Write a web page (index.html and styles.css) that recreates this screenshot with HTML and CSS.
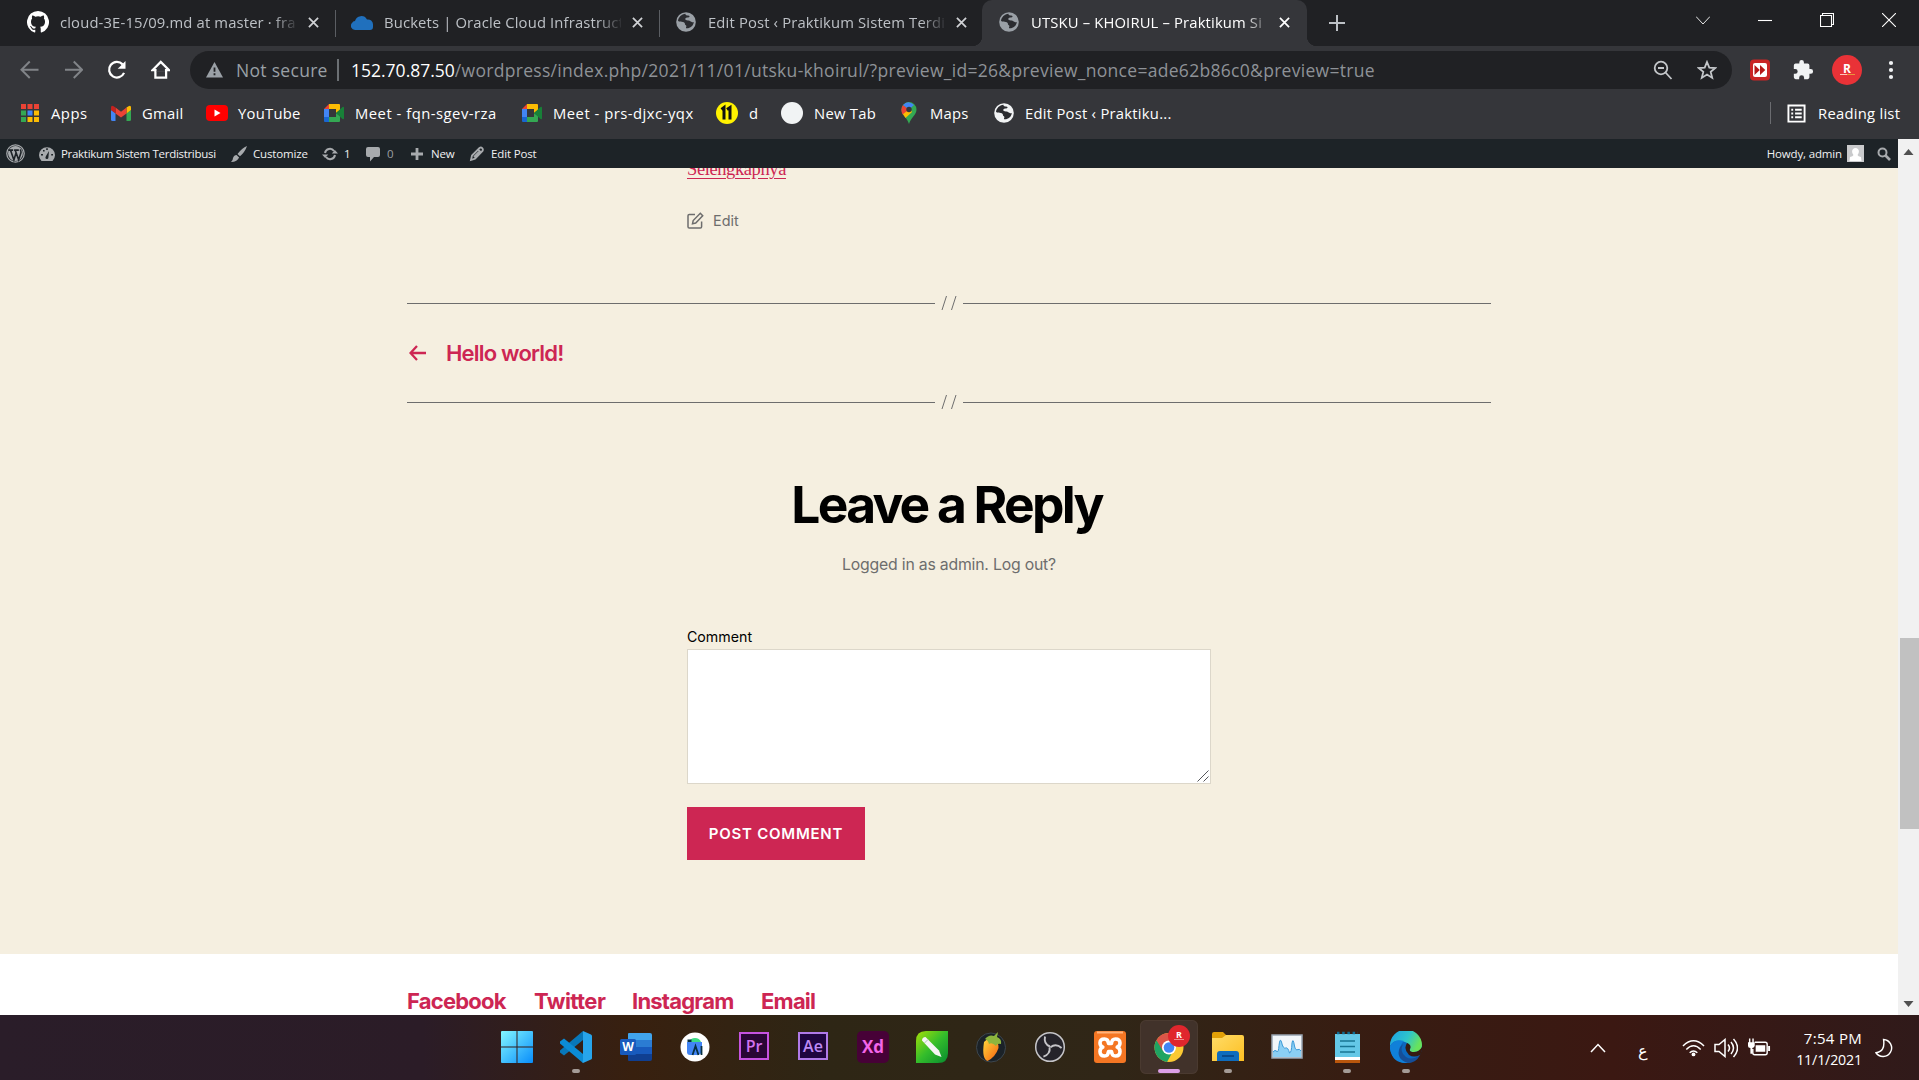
FILE: index.html
```html
<!DOCTYPE html>
<html lang="en">
<head>
<meta charset="utf-8">
<title>UTSKU – KHOIRUL – Praktikum Sistem Terdistribusi</title>
<link rel="stylesheet" href="styles.css">
</head>
<body>
<svg class="defs" aria-hidden="true">
  <defs>
    <symbol id="globe" viewBox="0 0 20 20"><circle cx="10" cy="10" r="9.8"/><path class="land" d="M9.5 1.8C5.5 2.2 2.4 5.3 2 9c1.700 1 3.400.8 4.900.900 1.300.300 2.100.900 2 2.100.100 1.200 1.200 1 1.500 2 .1.900-.7 1.300-.3 2.300 3.900.400 7.200-2.300 7.800-6.300-1.600.6-2.800-.4-3.900-1.100-1.300-.7-2.900-.2-4.100-.9-1-.700-.7-1.800.300-2.300 1.200-.4 2.700.100 3.300-.9.400-1-1.100-1.200-2.300-1.200-1.200-.200-1.800-.8-1.700-1.800z"/></symbol>
    <symbol id="cross" viewBox="0 0 12 12"><path d="M1 1l10 10M11 1L1 11"/></symbol>
    <symbol id="meet" viewBox="0 0 20 20"><path fill="#4285f4" d="M0 6h5v9H0z"/><path fill="#ea4335" d="M5 1v5H0z"/><path fill="#fbbc04" d="M5 1h10q1 0 1 1v5l-4 3V6H5z"/><path fill="#34a853" d="M5 14h7v-4l4 3v5q0 1-1 1H5z"/><path fill="#1967d2" d="M0 14h5v5H1q-1 0-1-1z"/><path fill="#188038" d="M12 10l6.500-6q1.500-.5 1.500.7v10.600q0 1.200-1.500.7z"/></symbol>
    <linearGradient id="win" x2="1" y2="1"><stop offset="0" stop-color="#83f7ff"/><stop offset="1" stop-color="#088dfb"/></linearGradient>
    <linearGradient id="corel" x2="1" y2="1"><stop offset="0" stop-color="#a5df08"/><stop offset=".5" stop-color="#34bd2b"/><stop offset="1" stop-color="#078b2f"/></linearGradient>
    <linearGradient id="fold" x2="1" y2="1"><stop offset="0" stop-color="#ffdc68"/><stop offset="1" stop-color="#fdbf22"/></linearGradient>
    <linearGradient id="edgeA" x2="1" y2=".4"><stop offset="0" stop-color="#1b9ee8"/><stop offset=".6" stop-color="#2fc5ca"/><stop offset="1" stop-color="#68e35c"/></linearGradient>
    <linearGradient id="fruit" x2="1" y2="1"><stop offset="0" stop-color="#ffd63c"/><stop offset="1" stop-color="#f4600f"/></linearGradient>
  </defs>
</svg>

<header class="browser">
  <div class="tabs">
    <div class="tab">
      <svg class="fav" viewBox="0 0 16 16" fill="#fff"><path d="M8 0a8 8 0 00-2.530 15.590c.4.070.550-.170.550-.380v-1.490c-2.230.480-2.700-.950-2.700-.950-.360-.920-.890-1.170-.890-1.170-.730-.500.060-.490.060-.490.800.060 1.230.830 1.230.830.710 1.220 1.870.870 2.330.660.070-.520.280-.870.500-1.070-1.770-.200-3.640-.890-3.640-3.950 0-.870.310-1.590.820-2.150-.080-.200-.360-1.020.080-2.120 0 0 .670-.210 2.200.820a7.600 7.600 0 014 0c1.530-1.040 2.200-.820 2.200-.820.440 1.100.160 1.920.080 2.120.510.560.820 1.270.820 2.150 0 3.070-1.870 3.750-3.650 3.950.290.250.540.730.540 1.480v2.200c0 .210.150.460.550.380A8 8 0 008 0z"/></svg>
      <span class="tab-title">cloud-3E-15/09.md at master · fra</span>
      <svg class="x"><use href="#cross"/></svg>
    </div>
    <div class="tab">
      <svg class="fav" viewBox="0 0 22 22"><path fill="#2070bd" d="M4 19a4.200 4.200 0 01-3-7 4 4 0 013-2 6.500 6.500 0 0112-1.500 5 5 0 016 5V16q0 3-3 3z"/></svg>
      <span class="tab-title">Buckets | Oracle Cloud Infrastruct</span>
      <svg class="x"><use href="#cross"/></svg>
    </div>
    <div class="tab last-idle">
      <svg class="fav globe"><use href="#globe"/></svg>
      <span class="tab-title">Edit Post ‹ Praktikum Sistem Terdi</span>
      <svg class="x"><use href="#cross"/></svg>
    </div>
    <div class="tab active">
      <svg class="fav globe"><use href="#globe"/></svg>
      <span class="tab-title">UTSKU – KHOIRUL – Praktikum Si</span>
      <svg class="x"><use href="#cross"/></svg>
    </div>
    <svg class="plus" viewBox="0 0 16 16"><path d="M8 0v16M0 8h16"/></svg>
    <div class="window-buttons">
      <svg class="caret" viewBox="0 0 14 14"><path d="M0 3.500l7 7.500 7-7.500"/></svg>
      <svg viewBox="0 0 14 14"><path d="M0 7.500h14"/></svg>
      <svg viewBox="0 0 14 14"><path d="M.5 2.500h11v11h-11zM2.500 2.500v-2h11v11h-2"/></svg>
      <svg viewBox="0 0 14 14"><path d="M0 0l14 14M14 0L0 14"/></svg>
    </div>
  </div>

  <div class="toolbar">
    <div class="nav">
      <svg class="dim" viewBox="0 0 20 20"><path d="M19 10H2M10 1.500L1.500 10l8.500 8.500"/></svg>
      <svg class="dim" viewBox="0 0 20 20"><path d="M1 10h17M10 1.500l8.500 8.500-8.500 8.500"/></svg>
      <svg viewBox="0 0 20 20"><path class="thick" d="M17.500 13.200A8 8 0 1116 4.500"/><path fill="#fff" stroke="none" d="M19 1v8h-8z"/></svg>
      <svg viewBox="0 0 20 20"><path class="thick" d="M4.500 9.500V18h11V9.500M1.500 10.500L10 2l8.500 8.500z"/><path d="M5.700 9h8.600v3H5.700z" fill="#35363a" stroke="none"/></svg>
    </div>
    <div class="omnibox">
      <svg class="warn" viewBox="0 0 17 16"><path fill="#9aa0a6" d="M8.500 0L17 15.500H0z"/><path stroke="#202124" stroke-width="1.800" d="M8.500 5.500v4.300M8.500 11.300v1.900"/></svg>
      <span class="not-secure">Not secure</span>
      <span class="url"><b>152.70.87.50</b>/wordpress/index.php/2021/11/01/utsku-khoirul/?preview_id=26&amp;preview_nonce=ade62b86c0&amp;preview=true</span>
      <svg class="omni-icon" viewBox="0 0 20 20"><circle cx="8" cy="8" r="6.300"/><path d="M12.500 12.500L18.500 19M5 8h6"/></svg>
      <svg class="omni-icon" viewBox="0 0 20 20"><path d="M10 2l2.300 5.600 6 .4-4.600 3.900 1.500 6-5.200-3.300-5.200 3.300 1.500-6L1.700 8l6-.4z"/></svg>
    </div>
    <svg class="ext" viewBox="0 0 22 22"><rect x="1" y=".5" width="20" height="21" rx="4" fill="#c92626"/><rect x="4" y="4" width="14" height="14" rx="2" fill="#fff"/><path fill="#b51919" d="M5.500 6l5.300 5-5.300 5zM11 6l5.300 5-5.300 5z"/></svg>
    <svg class="puzzle" viewBox="0 0 24 24"><path fill="#f1f3f4" d="M20.500 11H19V7a2 2 0 00-2-2h-4V3.500a2.500 2.500 0 00-5 0V5H4a2 2 0 00-2 2v3.800h1.500a2.700 2.700 0 010 5.400H2V20a2 2 0 002 2h3.800v-1.500a2.700 2.700 0 015.400 0V22H17a2 2 0 002-2v-4h1.500a2.500 2.500 0 000-5z"/></svg>
    <svg class="profile" viewBox="0 0 30 30"><circle cx="15" cy="15" r="15" fill="#e93237"/><text x="15" y="18" text-anchor="middle" font-size="12">R</text><path stroke="#ffc3bb" d="M8 19.500h7"/><path stroke="#e8953c" d="M15 19.500h8"/></svg>
    <svg class="dots" viewBox="0 0 6 20"><circle cx="3" cy="3" r="2.100"/><circle cx="3" cy="10" r="2.100"/><circle cx="3" cy="17" r="2.100"/></svg>
  </div>

  <div class="bookmarks">
    <div class="bm apps"><svg viewBox="0 0 20 20"><path fill="#ea4335" d="M1 1h5v5H1zM7.500 1h5v5h-5zM14 1h5v5h-5z"/><path fill="#34a853" d="M1 7.500h5v5H1zM1 14h5v5H1z"/><path fill="#4285f4" d="M7.500 7.500h5v5h-5z"/><path fill="#fbbc04" d="M14 7.500h5v5h-5zM7.500 14h5v5h-5zM14 14h5v5h-5z"/></svg>Apps</div>
    <div class="bm gmail"><svg viewBox="0 0 20 20"><path fill="#4285f4" d="M0 7l4.500 3v8H1.500Q0 18 0 16.500z"/><path fill="#34a853" d="M15.500 10L20 7v9.500q0 1.500-1.500 1.500h-3z"/><path fill="#fbbc04" d="M15.500 4.500q4.500-3.500 4.500 0V7l-4.500 3.500z"/><path fill="#ea4335" d="M4.500 4.500L10 8.700l5.500-4.200v6L10 14.500l-5.500-4z"/><path fill="#c5221f" d="M0 4.500q0-3.500 4.500 0v6L0 7z"/></svg>Gmail</div>
    <div class="bm youtube"><svg viewBox="0 0 22 20"><rect y="2" width="22" height="16" rx="4" fill="red"/><path fill="#fff" d="M8.500 6.500l6 3.500-6 3.500z"/></svg>YouTube</div>
    <div class="bm meet1"><svg viewBox="0 0 20 20"><use href="#meet"/></svg>Meet - fqn-sgev-rza</div>
    <div class="bm meet2"><svg viewBox="0 0 20 20"><use href="#meet"/></svg>Meet - prs-djxc-yqx</div>
    <div class="bm eleven"><svg viewBox="0 0 22 22"><circle cx="11" cy="11" r="11" fill="#fff200"/><path fill="none" stroke="#111" stroke-width="3" d="M5.500 7.500L8 5.500V17.500M11 7.500l3-2V17.500"/></svg>d</div>
    <div class="bm newtab"><svg viewBox="0 0 22 22"><circle cx="11" cy="11" r="11" fill="#f1f3f4"/></svg>New Tab</div>
    <div class="bm maps"><svg viewBox="0 0 16 22"><path fill="#34a853" d="M8 22C6.500 16 .5 13 .5 7.500a7.500 7.500 0 0115 0C15.500 13 9.500 16 8 22z"/><path fill="#fbbc04" d="M1.500 11.500L8 4l3 6-6.500 6z"/><path fill="#ea4335" d="M2 3l6 4.500-6.500 5Q-1 7 2 3z"/><path fill="#4285f4" d="M2 3q5-5.500 11 0L8 7.500z"/><circle cx="8" cy="7.500" r="2.700" fill="#35363a"/></svg>Maps</div>
    <div class="bm edit"><svg class="globe light"><use href="#globe"/></svg>Edit Post ‹ Praktiku...</div>
    <div class="reading"><svg viewBox="0 0 20 20"><path fill="none" stroke="#fff" stroke-width="2" d="M1.500 1.500h17v17h-17z"/><path stroke="#fff" stroke-width="2" d="M4.500 6h2M8.500 6h7M4.500 10h2M8.500 10h7M4.500 14h2M8.500 14h7"/></svg>Reading list</div>
  </div>
</header>

<div class="viewport">
  <div class="page">
    <nav class="adminbar">
      <svg class="wp" viewBox="0 0 20 20"><circle cx="10" cy="10" r="9.200" fill="none" stroke="#a7aaad" stroke-width="1.300"/><circle cx="10" cy="10" r="7.800" fill="#a7aaad"/><path fill="none" stroke="#1d2327" stroke-width="1.700" d="M2.500 6.500h5M4.800 6.500l3.500 10.300L10.700 9M8.500 6.500h5M9.700 6.500l3.600 10 2.500-7.500q.2-2-1-3.200"/></svg>
      <div class="ab site"><svg viewBox="0 0 16 16"><path fill="#a7aaad" d="M2.500 15A8 8 0 1113.500 15z"/><path fill="#1d2327" d="M7 10l3-5-.6 6.500a1.500 1.500 0 01-3 0zM2 8h2v1.500H2zM4 4h1.600v1.600H4zM7.200 2.300h1.600v1.600H7.200zM12.200 8H14v1.500h-1.800z"/></svg>Praktikum Sistem Terdistribusi</div>
      <div class="ab custom"><svg viewBox="0 0 16 16"><path fill="#a7aaad" d="M16 0q-5 2-9.500 8L9 10.300Q14 6 16 0zM5.500 9l2.600 2.400Q6.500 15.500 0 16q2-1.500 2-4 1-3 3.500-3z"/></svg>Customize</div>
      <div class="ab update"><svg viewBox="0 0 16 16"><path fill="none" stroke="#a7aaad" stroke-width="2" d="M3 7a5 5 0 019-2M13 9a5 5 0 01-9 2"/><path fill="#a7aaad" d="M9.800 7.500H16L12.900 4zM0 8.500h6.200L3.100 12z"/></svg>1</div>
      <div class="ab comments"><svg viewBox="0 0 16 16"><path fill="#a7aaad" d="M3 1h10q2 0 2 2v6q0 2-2 2H9l-4 4.500V11H3q-2 0-2-2V3q0-2 2-2z"/></svg>0</div>
      <div class="ab new"><svg viewBox="0 0 16 16"><path stroke="#a7aaad" stroke-width="2.800" d="M8 2v12M2 8h12"/></svg>New</div>
      <div class="ab editpost"><svg viewBox="0 0 16 16"><path fill="none" stroke="#a7aaad" stroke-width="1.800" d="M2 14l1-4.500L10.500 2q1.500-1 2.700.2t.3 2.800L6 12.700zM5 11l6-6M9 3.500l3.200 3.200"/></svg>Edit Post</div>
      <div class="howdy">Howdy, admin<svg class="face" viewBox="0 0 17 17"><path fill="#c9cacc" d="M0 0h17v17H0z"/><path fill="#fff" d="M8.500 3a3.500 3.500 0 013.400 4q-.4 2-1.400 3 .5 1.300 3.500 2l.5 4h-12l.5-4q3-.7 3.500-2-1-1-1.400-3a3.500 3.500 0 013.400-4z"/></svg><svg class="find" viewBox="0 0 14 14"><circle cx="5.500" cy="5.500" r="4" fill="none" stroke="#a7aaad" stroke-width="2"/><path stroke="#a7aaad" stroke-width="2.600" d="M8.500 8.500L13 13"/></svg></div>
    </nav>

    <main class="content">
      <div class="entry">
        <div class="more"><a>Selengkapnya</a></div>
        <div class="edit-link"><svg viewBox="0 0 17 17"><path d="M8 2.500H2.300Q1 2.500 1 3.800v10.900Q1 16 2.300 16h11q1.300 0 1.300-1.300V9.500M13.300 1.300l2.400 2.400-7 7.300-3.200.7.700-3.200z"/></svg>Edit</div>
      </div>
      <div class="rule"><i></i><svg viewBox="0 0 16 14"><path d="M1 14L5.500 0M10.500 14L15 0"/></svg><i></i></div>
      <a class="previous"><svg viewBox="0 0 18 16"><path d="M17 8H2M8 1L1.500 8 8 15"/></svg>Hello world!</a>
      <div class="rule"><i></i><svg viewBox="0 0 16 14"><path d="M1 14L5.500 0M10.500 14L15 0"/></svg><i></i></div>
      <h2>Leave a Reply</h2>
      <p class="logged">Logged in as admin. Log out?</p>
      <form class="reply">
        <label for="comment">Comment</label>
        <div class="field">
          <textarea id="comment"></textarea>
          <svg class="grip" viewBox="0 0 12 12"><path d="M.5 11.500l11-11M6.500 11.500l5-5"/></svg>
        </div>
        <button type="button">POST COMMENT</button>
      </form>
    </main>
    <footer class="footer"><a class="fb">Facebook</a><a class="tw">Twitter</a><a class="ig">Instagram</a><a class="em">Email</a></footer>
  </div>
  <div class="scrollbar">
    <svg viewBox="0 0 10 6"><path d="M0 6l5-6 5 6z"/></svg>
    <div class="thumb"></div>
    <svg viewBox="0 0 10 6"><path d="M0 0l5 6 5-6z"/></svg>
  </div>
</div>

<div class="taskbar">
  <div class="dock">
    <div class="app"><svg viewBox="0 0 32 32"><path fill="url(#win)" d="M1 0h14.500v15.500H0V1q0-1 1-1zM16.500 0H31q1 0 1 1v14.500H16.500zM0 16.500h15.500V32H1q-1 0-1-1zM16.500 16.500H32V31q0 1-1 1H16.500z"/></svg></div>
    <div class="app run"><svg viewBox="0 0 32 32"><path fill="#0877b9" d="M23 0v9L4 24.500 0 21.500v-2z"/><path fill="#0b8bd5" d="M4 7.500L0 10.500v2L23 32v-9z"/><path fill="#27a5ec" d="M23 0l8 3.500Q32 4 32 5v22q0 1-1 1.500L23 32q-1-.5 0-3z"/></svg></div>
    <div class="app"><svg viewBox="0 0 32 32"><path fill="#41a5ee" d="M9 2h21q2 0 2 2v5.500H8V3q0-1 1-1z"/><path fill="#2b7cd3" d="M8 9h24v7H8z"/><path fill="#185abd" d="M8 16h24v7H8z"/><path fill="#103f91" d="M8 23h24v5q0 2-2 2H9q-1 0-1-1z"/><rect y="8" width="16" height="16" rx="1.500" fill="#185abd"/><text x="8" y="20" text-anchor="middle" font-size="12">W</text></svg></div>
    <div class="app"><svg viewBox="0 0 32 32"><circle cx="16" cy="16" r="14.500" fill="#fff"/><path fill="#3ddc84" d="M10 11q1.500-4 6-4t6 4z"/><path fill="#073042" d="M8.500 8.500h4V12h-4z"/><path fill="#4285f4" d="M8 11h15v11l-4 2h-8q-3 0-3-3z"/><path fill="none" stroke="#073042" stroke-width="1.800" d="M13.500 24l3-9 3 9M22.500 15v9"/></svg></div>
    <div class="app"><svg viewBox="0 0 32 32"><path fill="#2a0635" stroke="#c653e0" stroke-width="2" d="M2 2h28v26H2z"/><text class="pr" x="16" y="21" text-anchor="middle">Pr</text></svg></div>
    <div class="app"><svg viewBox="0 0 32 32"><path fill="#1f0540" stroke="#b07ae8" stroke-width="2" d="M2 2h28v26H2z"/><text class="ae" x="16" y="21" text-anchor="middle">Ae</text></svg></div>
    <div class="app"><svg viewBox="0 0 32 32"><rect width="32" height="32" rx="5" fill="#470137"/><text class="xd" x="16" y="22" text-anchor="middle">Xd</text></svg></div>
    <div class="app"><svg viewBox="0 0 32 32"><path fill="url(#corel)" d="M10 0h22v22q0 10-10 10H0V10Q0 0 10 0z"/><path fill="#f5f5f5" d="M6 9.500Q6 6 9.500 6L23 19.500l2.500 6.500-6.500-2.500z"/><path stroke="#b5c1b2" d="M8.500 12l3.500-3.500"/></svg></div>
    <div class="app"><svg viewBox="0 0 32 32"><circle cx="16" cy="16.500" r="14.500" fill="#1b2228" stroke="#3d464d"/><path fill="url(#fruit)" d="M9 11q4-5 9-1 6 0 5.500 7-3 9-11 13-6-2-3.500-19z"/><path fill="#8db53d" d="M10 8q4-5 9-3l4-4-1 5q5 2 4 7-4-1-5 2-4-4-7-2-1-4-4-5z"/></svg></div>
    <div class="app"><svg viewBox="0 0 32 32"><circle cx="16" cy="16" r="14.300" fill="#25232a" stroke="#c5c4c8" stroke-width="1.500"/><g fill="none" stroke="#c5c4c8" stroke-width="1.900"><path d="M16 15.500Q9.500 13 11 5.500"/><path d="M16 15.500Q9.500 13 11 5.500" transform="rotate(120 16 16)"/><path d="M16 15.500Q9.500 13 11 5.500" transform="rotate(240 16 16)"/></g></svg></div>
    <div class="app"><svg viewBox="0 0 32 32"><rect width="32" height="32" rx="3" fill="#f47623"/><path stroke="#ffb27a" stroke-width="2" d="M3 1.500h26"/><path fill="none" stroke="#fff" stroke-width="3.600" stroke-linejoin="round" d="M10.500 8q-4.500 0-4.500 4 0 2.800 2.800 4.200Q6 17.500 6 20.500 6 25 10.500 25q3.700 0 4-4.500h3q.3 4.500 4 4.500 4.500 0 4.500-4.500 0-3-2.800-4.300Q26 14.800 26 12q0-4-4.500-4-3.700 0-4 4.500h-3Q14.200 8 10.500 8z"/></svg></div>
    <div class="app current"><svg viewBox="0 0 32 32"><circle cx="16" cy="16.500" r="14.500" fill="#fbc933"/><path fill="#1fa463" d="M16 16.500L3.400 9.300A14.500 14.500 0 0014 30.900l5-9z"/><path fill="#db5548" d="M16 16.500V10h13A14.500 14.500 0 003.400 9.300L10 20z"/><circle cx="16" cy="16.500" r="7" fill="#fff"/><circle cx="16" cy="16.500" r="5.300" fill="#4285f4"/></svg><svg class="badge" viewBox="0 0 22 22"><circle cx="11" cy="11" r="11" fill="#e0262d"/><text x="11" y="13" text-anchor="middle" font-size="9">R</text><path stroke="#f2898b" d="M6 14.500h10"/></svg></div>
    <div class="app run"><svg viewBox="0 0 32 32"><path fill="#e2a007" d="M2 1h9l3 3v6H0V3q0-2 2-2z"/><path fill="url(#fold)" d="M0 7h10l4-3h16q2 0 2 2v24H0z"/><path fill="#0f6cbd" d="M5 30v-7q0-3 3-3h16q3 0 3 3v7z"/><path stroke="#083f7d" stroke-width="1.500" d="M10 25h12"/></svg></div>
    <div class="app"><svg viewBox="0 0 32 32"><path fill="#f2f6fa" stroke="#98a4b1" stroke-width="1.500" d="M1 4h30v23H1z"/><path fill="#8bcff4" d="M2 26v-5q2-3 4-.5 1.500 1 2-6Q9 6 10.500 11q1.500 7 4 6t4 5q2 0 2.500-10 1-6 2.500 3 1 5 3.500 3.500 1.500-1 3 1.500v6z"/><path fill="none" stroke="#3b99d7" d="M2 21q2-3 4-.5 1.500 1 2-6Q9 6 10.500 11q1.500 7 4 6t4 5q2 0 2.500-10 1-6 2.500 3 1 5 3.500 3.500 1.500-1 3 1.500"/></svg></div>
    <div class="app run"><svg viewBox="0 0 32 32"><path fill="#64c8e7" d="M4 3h25v25H4z"/><path fill="#fff" d="M4 26h25v3H4z"/><path fill="#b9560c" d="M4 29h25v3H4z"/><path stroke="#106d94" stroke-width="2.500" stroke-dasharray="2.500 2.700" d="M6 2h21"/><path stroke="#187594" stroke-width="1.700" d="M9 10h15M9 15.500h15M9 21h15"/></svg></div>
    <div class="app run"><svg viewBox="0 0 32 32"><circle cx="16" cy="16" r="16" fill="#0c68bf"/><path fill="url(#edgeA)" d="M0 15A16 16 0 0132 14q0 7-8 7-7 0-4-3 1-5-5-7Q4 7 0 15z"/><path fill="#1080d9" d="M0 15Q5 7 14 10q-4 3-4 10 1 9 9 11.700Q3 34 0 18z"/><path fill="#154e98" d="M13 13q-4 8 3 13 6 4 14-2-4 8-12 8Q5 28 10 16z"/><path fill="#351b11" d="M17 12q5 2 3 6-1 3 4 3 5 0 8-5 .5 5-2 8-6 3-11 0-6-6-2-12z"/></svg></div>
  </div>
  <div class="tray">
    <svg class="up" viewBox="0 0 16 10"><path d="M1 9l7-7.500L15 9"/></svg>
    <span class="lang">ع</span>
    <svg class="wifi" viewBox="0 0 24 18"><path d="M1 7q11-11 22 0M4.500 10.500q7.500-7.500 15 0M8 14q4-4 8 0"/><circle cx="12" cy="15.700" r="2" fill="#fff" stroke="none"/></svg>
    <svg class="sound" viewBox="0 0 24 20"><path d="M1 6.500h4L11 1.500v17l-6-5H1zM14 6.500q3 3.500 0 7M17 4q5 6 0 12M19.500 1q8 9 0 18"/></svg>
    <svg class="battery" viewBox="0 0 24 20"><path d="M7 4h11q2 0 2 2v9q0 2-2 2H7q-2 0-2-2v-4"/><path fill="#fff" stroke="none" d="M8 7h10v7H8zM21 8h2v5h-2zM0 4h7v4q-1 2-2.500 2v6h-2v-6Q0 10 0 8zM1 0h1.500v4H1zM4.500 0H6v4H4.500z"/></svg>
    <div class="clock"><span class="time">7:54 PM</span><span>11/1/2021</span></div>
    <svg class="moon" viewBox="0 0 20 20"><path d="M9 1a9 9 0 11-8 14q10-1 8-14z"/></svg>
  </div>
</div>
</body>
</html>
```
FILE: styles.css
```css
* { box-sizing: border-box; }
body {
  margin: 0;
  width: 1919px;
  height: 1080px;
  overflow: hidden;
  display: flex;
  flex-direction: column;
  font-family: "Open Sans", "Noto Sans", sans-serif;
}
svg { display: block; flex: none; }
.defs { position: absolute; width: 0; height: 0; }
svg text { font-family: "Open Sans", sans-serif; font-weight: 700; letter-spacing: 0; fill: #fff; }

/* Browser chrome */
.browser { height: 139px; flex: none; background: #35363a; color: #fff; font-size: 14.800px; letter-spacing: .25px; }
.tabs { height: 46px; display: flex; align-items: center; background: #202124; padding-left: 12px; }
.tab { width: 324px; height: 46px; display: flex; align-items: center; padding: 0 16px 2px 15px; position: relative; color: #bdc1c6; }
.tab:nth-child(-n+2)::after { content: ""; position: absolute; right: 0; top: 10px; width: 1px; height: 27px; background: #5b5e63; }
.last-idle { width: 322px; }
.active { width: 325px; padding-left: 16px; background: #35363a; border-radius: 10px 10px 0 0; color: #fff; }
.active::before, .active::after { content: ""; position: absolute; bottom: 0; width: 10px; height: 10px; }
.active::before { left: -10px; background: radial-gradient(circle at 0 0, #202124 10px, #35363a 10.500px); }
.active::after { right: -10px; background: radial-gradient(circle at 100% 0, #202124 10px, #35363a 10.500px); }
.fav { width: 22px; height: 22px; }
.fav.globe { width: 20px; height: 20px; margin: 0 1px; }
.globe { fill: #9aa0a6; }
.land { fill: #2b2c30; }
.light { fill: #f1f3f4; }
.tab-title { width: 237px; margin-left: 11px; white-space: nowrap; letter-spacing: .15px; -webkit-mask-image: linear-gradient(90deg, #000 90%, transparent 101%); mask-image: linear-gradient(90deg, #000 90%, transparent 101%); }
.x { width: 11px; height: 11px; margin-left: 11px; stroke: #d0d2d5; stroke-width: 1.900; }
.active .x { stroke: #fff; }
.plus { width: 16px; height: 16px; margin-left: 22px; stroke: #bdc1c6; stroke-width: 2; }
.window-buttons { margin-left: auto; display: flex; gap: 48px; padding: 0 23px 6px 0; }
.window-buttons svg { width: 14px; height: 14px; fill: none; stroke: #fff; stroke-width: 1.100; }
.window-buttons .caret { stroke-width: .900; }

.toolbar { height: 48px; display: flex; align-items: center; padding-left: 20px; }
.nav { display: flex; gap: 24px; width: 170px; }
.nav svg { width: 19.500px; height: 19.500px; fill: none; stroke: #fff; stroke-width: 2; }
.nav .dim { stroke: #818488; }
.thick { stroke-width: 2.300; }
.omnibox { width: 1542px; height: 38px; border-radius: 19px; background: #202124; display: flex; align-items: center; padding: 0 15px 0 16px; font-size: 17.500px; letter-spacing: .3px; color: #9aa0a6; white-space: nowrap; }
.warn { width: 17px; height: 16px; }
.not-secure { width: 103px; margin-left: 13px; height: 22px; line-height: 22px; border-right: 2px solid #6c7074; }
.url { flex: 1; margin-left: 12px; line-height: 22px; color: #8e9297; }
.url b { font-weight: 400; letter-spacing: 0; color: #fff; }
.omni-icon { width: 20px; height: 20px; margin-left: 24px; fill: none; stroke: #c4c7ca; stroke-width: 1.800; }
.ext { width: 22px; height: 22px; margin-left: 17px; }
.puzzle { width: 22px; height: 22px; margin-left: 21px; }
.profile { width: 30px; height: 30px; margin-left: 18px; }
.dots { width: 6px; height: 20px; margin-left: 26px; fill: #f1f3f4; }

.bookmarks { height: 42px; display: flex; align-items: center; padding: 0 17px 4px 20px; white-space: nowrap; }
.bm, .reading { display: flex; align-items: center; }
.bm svg { width: 20px; height: 20px; margin-right: 11px; }
.apps { width: 91px; letter-spacing: .5px; }
.gmail { width: 95px; }
.youtube { width: 118px; }
.bm.youtube svg { width: 22px; height: 20px; margin-right: 10px; }
.meet1 { width: 198px; letter-spacing: .5px; }
.meet2 { width: 194px; letter-spacing: .5px; }
.eleven { width: 65px; }
.bm.eleven svg, .bm.newtab svg { width: 22px; height: 22px; }
.newtab { width: 120px; }
.maps { width: 93px; }
.bm.maps svg { width: 16px; height: 22px; margin-right: 13px; }
.reading { margin-left: auto; width: 132px; height: 22px; border-left: 1px solid #6b6c70; padding-left: 16px; }
.reading svg { width: 19px; height: 19px; margin-right: 12px; }

/* Page viewport */
.viewport { height: 876px; display: flex; flex: none; }
.page { width: 1898px; display: flex; flex-direction: column; }
.adminbar { height: 29px; flex: none; display: flex; align-items: center; background: #1d2327; color: #f0f0f1; font-size: 11.500px; letter-spacing: -.15px; padding-left: 6px; white-space: nowrap; }
.wp { width: 19px; height: 19px; margin-right: 14px; }
.ab { display: flex; align-items: center; }
.ab svg { width: 16px; height: 16px; margin-right: 6px; }
.site { width: 192px; letter-spacing: -.3px; }
.custom { width: 91px; }
.update { width: 43px; }
.comments { width: 44px; color: #9b9fa3; }
.new { width: 60px; }
.howdy { margin-left: auto; display: flex; align-items: center; padding-right: 7px; }
.face { width: 17px; height: 17px; margin-left: 5px; }
.find { width: 14px; height: 14px; margin-left: 13px; }

.content { height: 786px; flex: none; background: #f5efe0; font-family: Inter, sans-serif; display: flex; flex-direction: column; align-items: center; overflow: hidden; }
.entry { width: 524px; height: 127px; flex: none; }
.more { height: 20px; margin-top: -9px; font: 18.500px/20px "Liberation Serif", serif; letter-spacing: -.4px; color: #cd2653; text-decoration: underline; text-underline-offset: 3px; }
.edit-link { display: flex; align-items: center; gap: 9px; height: 20px; margin-top: 31px; font-size: 14.400px; color: #6d6d6d; }
.edit-link svg { width: 17px; height: 17px; fill: none; stroke: #6d6d6d; stroke-width: 1.500; }
.rule { width: 1084px; height: 16px; flex: none; display: flex; align-items: center; justify-content: space-between; }
.rule i { width: 528px; height: 1px; background: #6d6d6d; }
.rule svg { width: 16px; height: 14px; stroke: #6d6d6d; fill: none; }
.previous { width: 1084px; height: 83px; flex: none; display: flex; align-items: center; padding-left: 2px; gap: 19px; font-size: 22px; font-weight: 600; letter-spacing: -.800px; color: #cd2653; }
.previous svg { width: 18px; height: 16px; fill: none; stroke: #cd2653; stroke-width: 2.300; }
h2 { margin: 62px 0 0; padding-right: 5px; font-size: 51.500px; line-height: 64px; font-weight: 700; letter-spacing: -2.750px; color: #000; }
.logged { margin: 17px 0 0; font-size: 15.800px; line-height: 24px; letter-spacing: -.200px; color: #6d6d6d; }
.reply { width: 524px; margin-top: 49px; display: flex; flex-direction: column; align-items: flex-start; }
.reply label { font-size: 14.200px; line-height: 22px; color: #000; }
.field { position: relative; display: flex; margin: 1px 0 23px; }
.reply textarea { width: 524px; height: 135px; border: 1px solid #dcd7ca; background: #fff; resize: none; }
.grip { position: absolute; right: 2px; bottom: 2px; width: 12px; height: 12px; stroke: #55565a; stroke-width: 1; }
.reply button { width: 178px; height: 53px; padding: 0; border: 0; background: #cd2653; color: #fff; font: 600 15px Inter, sans-serif; letter-spacing: .750px; }
.footer { flex: 1; background: #fff; padding: 33px 0 0 407px; display: flex; font: 700 22px/28px Inter, sans-serif; letter-spacing: -.780px; color: #cd2653; overflow: hidden; }
.fb { width: 127px; }
.tw { width: 98px; letter-spacing: -.55px; }
.ig { width: 129px; }

.scrollbar { width: 21px; background: #f1f1f1; display: flex; flex-direction: column; align-items: center; padding: 10px 0 8px; }
.scrollbar svg { width: 11px; height: 6px; fill: #505050; }
.thumb { width: 19px; height: 191px; margin: 483px 0 auto 2px; background: #c1c1c1; }

/* Taskbar */
.taskbar { height: 65px; flex: none; display: flex; align-items: center; justify-content: space-between; padding: 0 25px 0 488px; background: linear-gradient(90deg, #2a1d29 0, #2b1c27 22%, #38200f 33%, #2e2615 43%, #302617 58%, #371d12 70%, #3b1812 84%, #301a1a 100%); }
.dock { display: flex; gap: 1.250px; }
.app { width: 58px; height: 54px; display: flex; align-items: center; justify-content: center; position: relative; top: -.5px; border-radius: 6px; }
.app > svg { width: 32px; height: 32px; }
.app.run::after, .app.current::after { content: ""; position: absolute; bottom: 1px; width: 8px; height: 4px; border-radius: 2px; background: #a49b96; }
.app.current { background: #41322a; box-shadow: inset 0 0 0 1px #4a3a30; }
.app.current::after { width: 22px; background: #dca0e8; }
.app .badge { position: absolute; width: 22px; height: 22px; left: 28px; top: 5px; }
.dock .pr { font-size: 16px; font-weight: 600; fill: #d373ee; }
.dock .ae { font-size: 16px; font-weight: 600; fill: #bd8af5; }
.dock .xd { font-size: 17px; fill: #f365e8; }
.tray { display: flex; align-items: center; color: #fff; }
.tray svg { fill: none; stroke: #fff; stroke-width: 1.500; }
.up { width: 16px; height: 10px; margin-right: 32px; }
.lang { width: 44px; font: 16px "DejaVu Sans", sans-serif; padding-top: 5px; }
.wifi { width: 23px; height: 18px; margin-right: 9px; }
.sound { width: 24px; height: 20px; margin-right: 10px; }
.battery { width: 23px; height: 20px; }
.clock { width: 91px; display: flex; flex-direction: column; align-items: flex-end; font-size: 14.200px; line-height: 22px; letter-spacing: -.15px; padding-top: 2px; }
.time { font-size: 15px; letter-spacing: .300px; }
.moon { width: 19px; height: 20px; margin-left: 13px; }
```
